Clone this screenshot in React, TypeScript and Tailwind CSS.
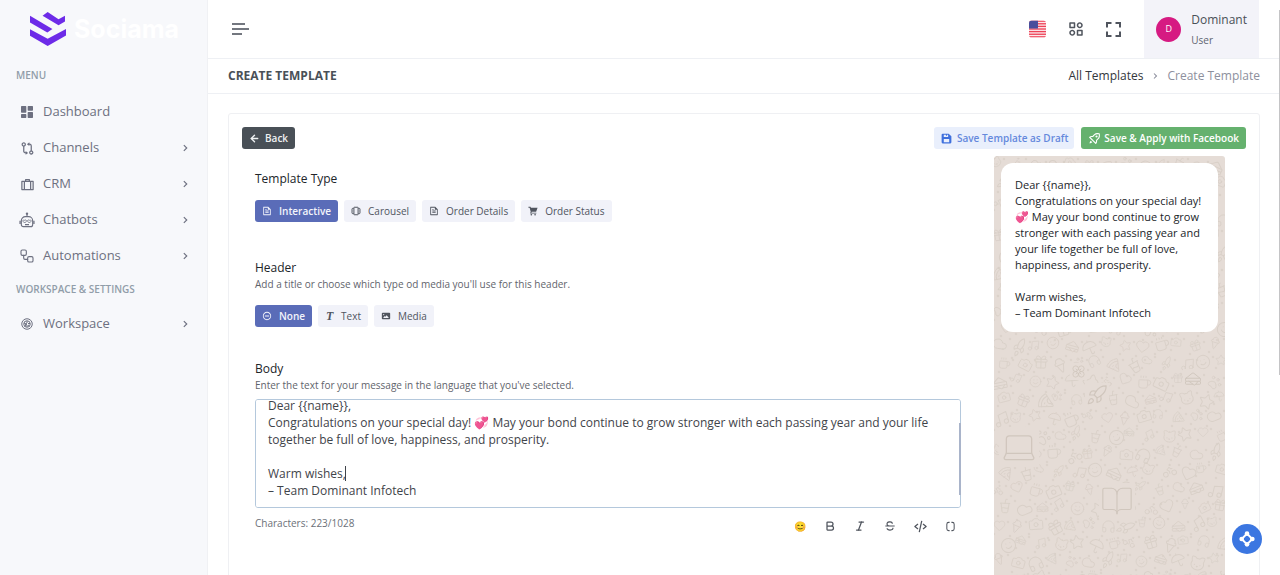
import { useEffect, useRef, useState } from 'react'
import type { ReactNode } from 'react'
import {
  BiCategoryAlt,
  BiChevronRight,
  BiCodeAlt,
  BiGitCompare,
  BiRocket,
  BiSolidDashboard,
  BiSolidImage,
  BiSolidSave,
  BiStrikethrough,
} from 'react-icons/bi'
import { RiFileTextLine, RiIndeterminateCircleLine, RiSuitcaseLine } from 'react-icons/ri'
import {
  ArrowLeft,
  Bike,
  Bold,
  BookOpen,
  Camera,
  Cat,
  Cloud,
  Coffee,
  CupSoda,
  Flower,
  Gift,
  Headphones,
  Heart,
  IceCreamCone,
  Italic,
  Laptop,
  Music,
  PawPrint,
  Pizza,
  Rocket,
  Sandwich,
  Smile,
  Star,
  Umbrella,
  Workflow,
} from 'lucide-react'

const MESSAGE = `Dear {{name}},
Congratulations on your special day! 💞 May your bond continue to grow stronger with each passing year and your life together be full of love, happiness, and prosperity.

Warm wishes,
– Team Dominant Infotech`

function Logo() {
  return (
    <svg viewBox="0 0 106 100" className="h-[34px] w-9" fill="#6d2be8">
      <path d="M0 11 66 50 51 60 0 31Z" />
      <path d="M52 0 37 11 84 39 103 28V11L84 21Z" />
      <path d="M0 51 52 79 106 50V69L52 100 0 70Z" />
    </svg>
  )
}

function RobotIcon() {
  return (
    <svg viewBox="0 0 24 24" className="size-4" fill="none" stroke="currentColor" strokeWidth="1.7">
      <circle cx="12" cy="2.500" r="1.8" fill="currentColor" stroke="none" />
      <path d="M12 3v4M9.500 7h5a6 6 0 0 1 6 6v6a3 3 0 0 1-3 3h-11a3 3 0 0 1-3-3v-6a6 6 0 0 1 6-6ZM1.500 13v5M22.500 13v5M9 19h6" />
      <path d="m8.500 16.500-2.500-2.500a1.300 1.300 0 0 1 2.500-1.300 1.300 1.300 0 0 1 2.500 1.300Zm7 0-2.500-2.500a1.300 1.300 0 0 1 2.500-1.300 1.300 1.300 0 0 1 2.500 1.300Z" strokeWidth="1.300" />
    </svg>
  )
}

function WheelIcon() {
  return (
    <svg viewBox="0 0 24 24" className="size-3" fill="none" stroke="currentColor" strokeWidth="2">
      <circle cx="12" cy="12" r="10.500" />
      <circle cx="12" cy="12" r="6.500" />
      <path d="M12 6v4l-3 2 3 2v4M6 10l4 2-2 5M14 11h4M14 14l3 2" />
    </svg>
  )
}

function ExpandIcon() {
  return (
    <svg viewBox="0 0 15 15" className="size-[15px]" fill="none" stroke="currentColor" strokeWidth="2">
      <path d="M1 5.500V1h4.500M9.500 1H14v4.500M14 9.500V14H9.500M5.500 14H1V9.500" />
    </svg>
  )
}

function CarouselIcon() {
  return (
    <svg viewBox="0 0 24 24" className="size-[10px]" fill="none" stroke="currentColor" strokeWidth="2.400">
      <rect x="7" y="3" width="10" height="18" rx="1" />
      <path d="M6.500 5.500H4.500a2 2 0 0 0-2 2v9a2 2 0 0 0 2 2h2M17.500 5.500h2a2 2 0 0 1 2 2v9a2 2 0 0 1-2 2h-2" />
    </svg>
  )
}

function CartIcon() {
  return (
    <svg viewBox="0 0 24 24" className="size-[10px]" fill="currentColor">
      <path d="M1 2h5l1 2h16l-3.500 10H9l-1 2h12v2H5l1.500-4L4 4H1Z" />
      <circle cx="8" cy="21" r="2" />
      <circle cx="17" cy="21" r="2" />
    </svg>
  )
}

function ParensIcon() {
  return (
    <svg viewBox="0 0 24 24" className="size-[11px]" fill="none" stroke="currentColor" strokeWidth="2.200">
      <path d="M10 3H8a4 4 0 0 0-4 4v10a4 4 0 0 0 4 4h2M14 3h2a4 4 0 0 1 4 4v10a4 4 0 0 1-4 4h-2" />
    </svg>
  )
}

function FlagIcon() {
  return (
    <svg viewBox="0 0 18 18" className="h-[18px] w-[17px]">
      <clipPath id="flag">
        <rect width="18" height="18" rx="3" />
      </clipPath>
      <g clipPath="url(#flag)">
        <rect width="18" height="18" fill="#fbe9ec" />
        {[0, 1, 2, 3, 4, 5, 6].map((i) => (
          <rect key={i} y={i * 2.77} width="18" height="1.4" fill="#ee4257" />
        ))}
        <rect width="9.500" height="8.500" fill="#4a4e9c" />
      </g>
    </svg>
  )
}

function SupportIcon() {
  return (
    <svg viewBox="0 0 24 24" className="size-4" fill="none" stroke="#fff" strokeWidth="3">
      <path d="M12 4 20 12 12 20 4 12Z" />
      <g fill="#fff" stroke="none">
        <circle cx="12" cy="4" r="3.500" />
        <circle cx="20" cy="12" r="3.500" />
        <circle cx="12" cy="20" r="3.500" />
        <circle cx="4" cy="12" r="3.500" />
      </g>
    </svg>
  )
}

const doodles = [Cat, Heart, Camera, Pizza, Cloud, Music, Star, Coffee, Gift, PawPrint, Rocket, Smile, Umbrella, Bike, IceCreamCone, Headphones, CupSoda, Sandwich]

// placed by hand, everything else is scattered on a loose grid
const landmarks = [
  { Icon: Flower, x: 77, y: 208, size: 15 },
  { Icon: Laptop, x: 6, y: 272, size: 38 },
  { Icon: BookOpen, x: 106, y: 328, size: 34 },
  { Icon: Sandwich, x: 190, y: 214, size: 18 },
  { Icon: Rocket, x: 92, y: 228, size: 22 },
]

function ChatWallpaper() {
  const cells = Array.from({ length: 13 * 29 }, (_, i) => {
    const col = i % 13
    const row = Math.floor(i / 13)
    const seed = (i * 7919 + row * 131) % 97
    return {
      Icon: doodles[(i * 5 + row * 7 + seed) % doodles.length],
      x: col * 18 - 4 + (row % 2) * 7 + (seed % 4),
      y: row * 18 + ((seed * 3) % 6),
      size: 12 + (seed % 6),
      turn: ((seed * 11) % 60) - 30,
    }
  })

  return (
    <svg aria-hidden="true" className="absolute inset-0 h-full w-full" stroke="#d9d0c8" fill="none">
      {cells.map(({ Icon, x, y, size, turn }, i) => (
        <g key={i}>
          <g transform={`rotate(${turn} ${x + size / 2} ${y + size / 2})`}>
            <Icon x={x} y={y} size={size} color="#d9d0c8" strokeWidth={1.4} />
          </g>
          <circle cx={x + size + 2} cy={y + 3} r="0.8" />
          <circle cx={x + 1} cy={y + size + 2} r="0.8" />
        </g>
      ))}
      {landmarks.map(({ Icon, x, y, size }, i) => (
        <g key={i}>
          <rect x={x - 1} y={y - 1} width={size + 2} height={size + 2} fill="#e5dcd6" stroke="none" />
          <Icon x={x} y={y} size={size} color="#d0c6bd" strokeWidth={size > 30 ? 0.8 : 1.3} />
        </g>
      ))}
    </svg>
  )
}

function NavItem({ icon, label, arrow = true }: { icon: ReactNode; label: string; arrow?: boolean }) {
  return (
    <a href="#" className="flex h-9 items-center pr-[15px] pl-[19px] text-[13px] text-[#6d7080]">
      <span className="flex w-4 justify-center">{icon}</span>
      <span className="ml-2 flex-1">{label}</span>
      {arrow && <BiChevronRight className="size-[14px]" />}
    </a>
  )
}

function Sidebar() {
  return (
    <aside className="w-[208px] shrink-0 border-r border-[#f0f1f4] bg-[#f7f8fb]">
      <a href="#" className="flex h-[58px] items-center gap-2 pl-[30px]">
        <Logo />
        <span className="font-['Inter'] text-[25px] leading-none font-bold text-white">Sociama</span>
      </a>
      <nav className="pt-2">
        <p className="pl-4 text-[10px] leading-[18px] font-semibold text-[#919da9]">MENU</p>
        <div className="mt-[10px] mb-[6px]">
          <NavItem icon={<BiSolidDashboard className="size-4" />} label="Dashboard" arrow={false} />
          <NavItem icon={<BiGitCompare className="size-[15px]" />} label="Channels" />
          <NavItem icon={<RiSuitcaseLine className="size-[15px]" />} label="CRM" />
          <NavItem icon={<RobotIcon />} label="Chatbots" />
          <NavItem icon={<Workflow className="size-4" strokeWidth={1.7} />} label="Automations" />
        </div>
        <p className="pl-4 text-[10px] leading-[18px] font-semibold text-[#919da9]">WORKSPACE &amp; SETTINGS</p>
        <div className="mt-2">
          <NavItem icon={<WheelIcon />} label="Workspace" />
        </div>
      </nav>
    </aside>
  )
}

function TopBar() {
  return (
    <header className="flex h-[59px] items-center border-b border-[#eef0f4] pr-[21px] pl-6">
      <button aria-label="Toggle menu" className="flex flex-col gap-[3px]">
        <span className="h-[2px] w-[13px] bg-[#73777f]" />
        <span className="h-[2px] w-[17px] bg-[#73777f]" />
        <span className="h-[2px] w-[10px] bg-[#73777f]" />
      </button>
      <div className="ml-auto flex h-full items-center">
        <button aria-label="Language" className="mr-[21px]">
          <FlagIcon />
        </button>
        <button aria-label="Apps" className="mr-[21px] text-[#50555e]">
          <BiCategoryAlt className="size-[18px]" />
        </button>
        <button aria-label="Full screen" className="mr-[23px] text-[#50555e]">
          <ExpandIcon />
        </button>
        <button className="flex h-full items-center gap-[10px] bg-[#f3f3f9] px-3 text-left">
          <span className="flex size-[25px] items-center justify-center rounded-full bg-[#d61a82] text-[9px] text-white">D</span>
          <span className="block pt-[2px]">
            <span className="block text-[12px] leading-5 text-[#495057]">Dominant</span>
            <span className="block text-[10px] leading-5 text-[#5f6470]">User</span>
          </span>
        </button>
      </div>
    </header>
  )
}

function PageTitle() {
  return (
    <div className="flex h-[35px] items-center justify-between border-b border-[#eef0f4] px-5">
      <h1 className="text-[12px] font-bold text-[#495057]">CREATE TEMPLATE</h1>
      <nav aria-label="Breadcrumb" className="flex items-center text-[12px]">
        <a href="#" className="text-[#33373d]">All Templates</a>
        <BiChevronRight className="mx-[6px] size-3 text-[#878a99]" />
        <span className="text-[#8d909d]">Create Template</span>
      </nav>
    </div>
  )
}

function Choice({ icon, label, active = false }: { icon: ReactNode; label: string; active?: boolean }) {
  return (
    <button
      aria-pressed={active}
      className={`flex h-[22px] items-center gap-[7px] rounded-[3px] px-[7px] text-[10px] ${
        active ? 'bg-[#5a6cb8] font-semibold text-[#f3f4fb]' : 'bg-[#f1f2f9] font-medium text-[#50555f]'
      }`}
    >
      {icon}
      {label}
    </button>
  )
}

function ToolButton({ label, children }: { label: string; children: ReactNode }) {
  return (
    <button aria-label={label} className="flex h-5 w-[30px] items-center justify-center text-[10px]">
      {children}
    </button>
  )
}

function Toolbar() {
  return (
    <div className="-mr-1 flex items-center text-[#50555e]">
      <ToolButton label="Emoji">😊</ToolButton>
      <ToolButton label="Bold"><Bold className="size-3" strokeWidth={2.5} /></ToolButton>
      <ToolButton label="Italic"><Italic className="size-3" strokeWidth={2.5} /></ToolButton>
      <ToolButton label="Strikethrough"><BiStrikethrough className="size-[14px]" /></ToolButton>
      <ToolButton label="Code"><BiCodeAlt className="size-[15px]" /></ToolButton>
      <ToolButton label="Variable"><ParensIcon /></ToolButton>
    </div>
  )
}

function BodyField({ value, onChange }: { value: string; onChange: (v: string) => void }) {
  const ref = useRef<HTMLTextAreaElement>(null)

  useEffect(() => {
    if (ref.current) ref.current.scrollTop = ref.current.scrollHeight
  }, [])

  return (
    <div className="relative mt-[7px]">
      <textarea
        id="body"
        ref={ref}
        value={value}
        onChange={(e) => onChange(e.target.value)}
        className="block h-[109px] w-full resize-none rounded-[3px] border border-[#b4c8dc] bg-white px-3 py-2 text-[12px] leading-[17px] text-[#3f444a] outline-none [scrollbar-width:none]"
      />
      <span className="absolute top-6 right-0 h-[72px] w-[2px] bg-[#a9b4ca]" />
      <span className="absolute top-[67px] left-[90px] h-[15px] w-px bg-[#3f444a]" />
    </div>
  )
}

export default function App() {
  const [body, setBody] = useState(MESSAGE)

  return (
    <div className="flex h-screen overflow-hidden bg-white font-['Open_Sans',sans-serif]">
      <Sidebar />
      <div className="min-w-0 flex-1">
        <TopBar />
        <PageTitle />
        <main className="px-5 pt-[19px]">
          <div className="rounded-[3px] border border-[#eff0f3] px-[13px] pt-[13px]">
            <div className="flex items-center gap-[7px] text-[10px] font-semibold">
              <button className="mr-auto flex h-[22px] items-center gap-[5px] rounded-[3px] bg-[#495057] px-[7px] text-[#eff1f3]">
                <ArrowLeft className="size-[11px]" strokeWidth={3} />
                Back
              </button>
              <button className="flex h-[22px] items-center gap-1 rounded-[3px] bg-[#e9effc] px-[6px] text-[#6589dc]">
                <BiSolidSave className="size-[13px] text-[#3f70dd]" />
                Save Template as Draft
              </button>
              <button className="flex h-[22px] items-center gap-[3px] rounded-[3px] bg-[#65b16e] px-[7px] text-white">
                <BiRocket className="size-[13px]" />
                Save &amp; Apply with Facebook
              </button>
            </div>

            <div className="mt-[7px] flex pr-[21px] pl-[13px]">
              <div className="min-w-0 flex-1 pt-[14px]">
                <h2 className="text-[12px] leading-[18px] font-medium text-[#212529]">Template Type</h2>
                <div className="mt-3 flex gap-[6px]">
                  <Choice active icon={<RiFileTextLine className="size-[10px]" />} label="Interactive" />
                  <Choice icon={<CarouselIcon />} label="Carousel" />
                  <Choice icon={<RiFileTextLine className="size-[10px]" />} label="Order Details" />
                  <Choice icon={<CartIcon />} label="Order Status" />
                </div>

                <h2 className="mt-[37px] text-[12px] leading-[18px] font-medium text-[#212529]">Header</h2>
                <p className="text-[10px] leading-[14px] text-[#5f646c]">
                  Add a title or choose which type od media you'll use for this header.
                </p>
                <div className="mt-[14px] flex gap-[6px]">
                  <Choice active icon={<RiIndeterminateCircleLine className="size-[10px]" />} label="None" />
                  <Choice icon={<span className="w-[9px] font-['Liberation_Serif',serif] text-[12px] font-bold italic">T</span>} label="Text" />
                  <Choice icon={<BiSolidImage className="size-[10px]" />} label="Media" />
                </div>

                <label htmlFor="body" className="mt-[33px] block text-[12px] leading-[18px] font-medium text-[#212529]">Body</label>
                <p className="text-[10px] leading-[14px] text-[#5f646c]">
                  Enter the text for your message in the language that you've selected.
                </p>
                <BodyField value={body} onChange={setBody} />
                <div className="mt-2 flex items-start justify-between">
                  <p className="text-[10px] leading-[14px] text-[#6b7078]">Characters: 223/1028</p>
                  <Toolbar />
                </div>
              </div>

              <section aria-label="Preview" className="relative ml-[33px] min-h-[520px] w-[231px] shrink-0 overflow-hidden rounded-[3px] bg-[#e5dcd6] p-[7px]">
                <ChatWallpaper />
                <p className="relative rounded-xl bg-white px-[14px] pt-[14px] pb-[11px] text-[11px] leading-4 whitespace-pre-wrap text-[#212529]">
                  {body}
                </p>
              </section>
            </div>
          </div>
        </main>
      </div>
      <button aria-label="Support" className="fixed right-[18px] bottom-[21px] flex size-[30px] items-center justify-center rounded-full bg-[#3b76e1]">
        <SupportIcon />
      </button>
      <span className="fixed top-[10px] right-0 h-[365px] w-px bg-[#c4c4c6]" />
    </div>
  )
}
